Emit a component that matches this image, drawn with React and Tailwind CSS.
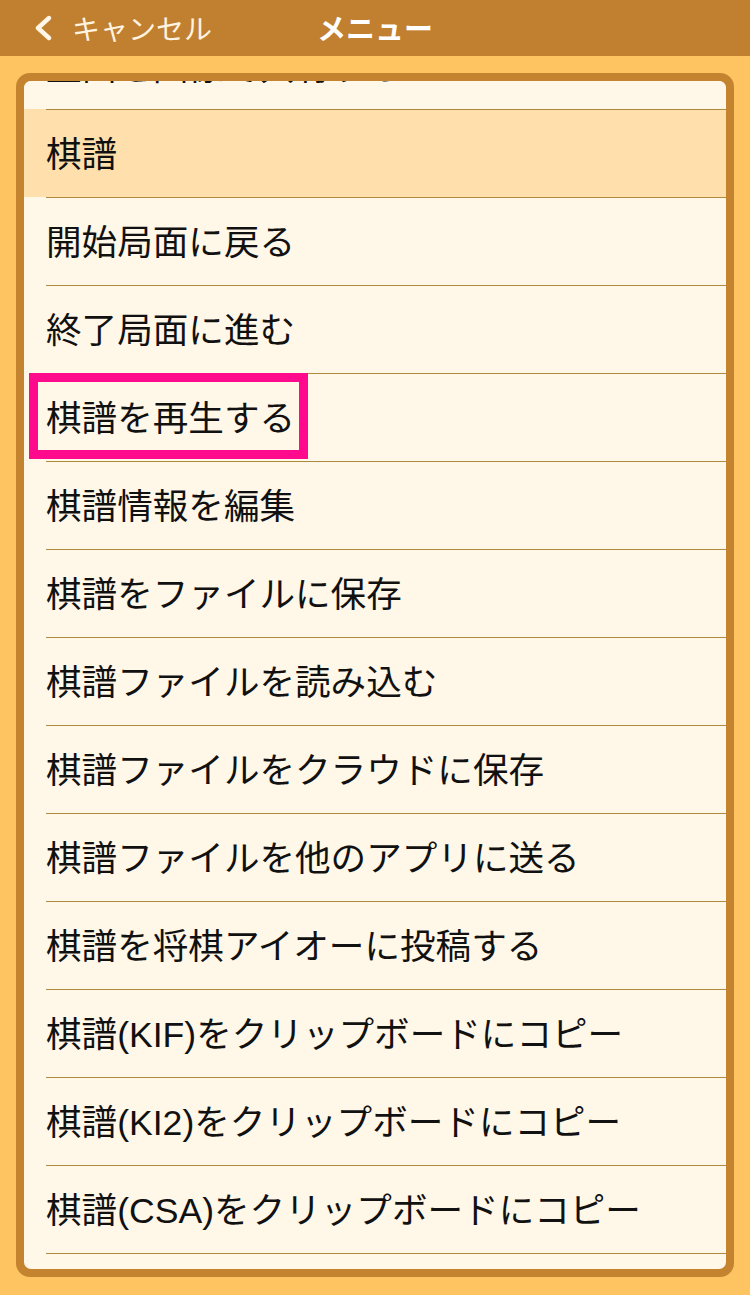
import React from "react";

const items = [
  "開始局面に戻る",
  "終了局面に進む",
  "棋譜を再生する",
  "棋譜情報を編集",
  "棋譜をファイルに保存",
  "棋譜ファイルを読み込む",
  "棋譜ファイルをクラウドに保存",
  "棋譜ファイルを他のアプリに送る",
  "棋譜を将棋アイオーに投稿する",
  "棋譜(KIF)をクリップボードにコピー",
  "棋譜(KI2)をクリップボードにコピー",
  "棋譜(CSA)をクリップボードにコピー",
];

const font = { fontFamily: '"Liberation Sans", "Noto Sans CJK JP", sans-serif' };

function Row({ text, highlight, boxed }) {
  return (
    <div className={`relative ${highlight ? "bg-[#FFDFAB]" : "bg-[#FFF7E8]"}`}>
      <div className="ml-[22px] h-[88px] border-t border-[#AE8A3E] flex items-center">
        <span className="pt-[4px] text-[35.6px] leading-none text-[#111]">{text}</span>
      </div>
      {boxed && (
        <div className="absolute left-[5px] top-0 w-[279px] h-[86px] border-[9px] border-[#FF0A8C]" />
      )}
    </div>
  );
}

export default function App() {
  return (
    <div className="w-[750px] h-[1295px] bg-[#FFC462] flex flex-col" style={font}>
      <div className="relative h-[56px] bg-[#C1802F] flex items-center shrink-0">
        <div className="flex items-center pl-[32px]">
          <svg width="22" height="26" viewBox="0 0 22 26" className="mr-[18px]">
            <path d="M17 3 L6 13 L17 23" fill="none" stroke="#FFF6E8" strokeWidth="4.4" strokeLinecap="round" strokeLinejoin="round" />
          </svg>
          <span className="pt-[5px] text-[28px] leading-none text-[#FFF3E2]">キャンセル</span>
        </div>
        <div className="absolute inset-0 flex items-center justify-center">
          <span className="pt-[5px] text-[29px] leading-none font-bold text-white">メニュー</span>
        </div>
      </div>
      <div className="px-4 pt-[17px]">
        <div className="h-[1204px] rounded-[14px] border-8 border-[#C4832F] bg-[#C4832F]">
          <div className="h-full rounded-[7px] overflow-hidden bg-[#FFF7E8]">
            <div className="h-[28px] overflow-hidden bg-[#FFF7E8]">
              <div className="-mt-[58px] h-[88px] ml-[22px] flex items-center">
                <span className="pt-[4px] text-[35.6px] leading-none text-[#111]">盤面を画像で共有する</span>
              </div>
            </div>
            <Row text="棋譜" highlight />
            {items.map((t) => (
              <Row key={t} text={t} boxed={t === "棋譜を再生する"} />
            ))}
            <div className="ml-[22px] border-t border-[#AE8A3E]" />
          </div>
        </div>
      </div>
    </div>
  );
}
